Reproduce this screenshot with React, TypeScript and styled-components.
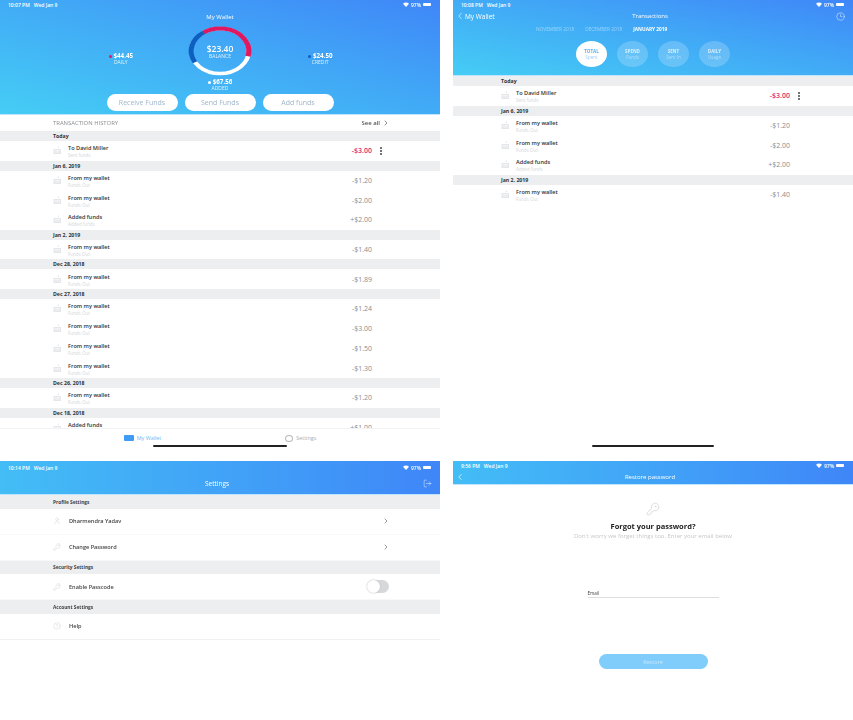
import styled, { createGlobalStyle } from 'styled-components'
import { ChevronLeft, ChevronRight, Clock3, KeyRound, LogOut, User, CircleHelp } from 'lucide-react'

const GlobalStyle = createGlobalStyle`
   html, body {
      margin: 0;
      background: #fff;
      font-family: 'Open Sans', 'Liberation Sans', sans-serif;
   }
`

const blueGradient = 'linear-gradient(to top right, #45cdf5 0%, #41a8f6 55%, #3f86f8 100%)'

type Tx = { title: string; sub: string; amount: string; active?: boolean }
type Section = { date: string; rows: Tx[] }

const out = (amount: string, sub = 'Funds Out'): Tx => ({ title: 'From my wallet', sub, amount })
const added = (amount: string): Tx => ({ title: 'Added funds', sub: 'Added funds', amount })
const sent: Tx = { title: 'To David Miller', sub: 'Sent funds', amount: '-$3.00', active: true }

const history: Section[] = [
   { date: 'Today', rows: [sent] },
   { date: 'Jan 6, 2019', rows: [out('-$1.20'), out('-$2.00'), added('+$2.00')] },
   { date: 'Jan 2, 2019', rows: [out('-$1.40')] },
   { date: 'Dec 28, 2018', rows: [out('-$1.89')] },
   { date: 'Dec 27, 2018', rows: [out('-$1.24'), out('-$3.00'), out('-$1.50'), out('-$1.30')] },
   { date: 'Dec 26, 2018', rows: [out('-$1.20')] },
   { date: 'Dec 18, 2018', rows: [added('+$1.00')] },
]

const circles = [
   { top: 'TOTAL', bottom: 'Spent' },
   { top: 'SPEND', bottom: 'Funds' },
   { top: 'SENT', bottom: 'Sent In' },
   { top: 'DAILY', bottom: 'Usage' },
]

const StatusBar = ({ time }: { time: string }) => (
   <Status>
      <span>{time} &nbsp; Wed Jan 9</span>
      <StatusRight>
         <svg width="6" height="5" viewBox="0 0 12 10" fill="#fff">
            <path d="M6 10 0 3.5C3.5 0 8.5 0 12 3.5z" />
         </svg>
         97%
         <Battery />
      </StatusRight>
   </Status>
)

const CardIcon = () => (
   <svg width="9" height="9" viewBox="0 0 18 18" fill="none">
      <path d="M11 1v3" stroke="#d5d8dc" strokeWidth="1.4" />
      <rect x="1" y="6" width="15" height="10" fill="#e4e6e9" />
      <path d="M3 9h11M3 12h11" stroke="#fff" strokeWidth="1.2" />
   </svg>
)

const DotsIcon = () => (
   <Dots>
      <i />
      <i />
      <i />
   </Dots>
)

const Transactions = ({ sections, inset, right }: { sections: Section[]; inset: number; right: number }) => (
   <List $inset={inset} $right={right}>
      {sections.map((section) => (
         <div key={section.date}>
            <DateBar>{section.date}</DateBar>
            {section.rows.map((tx, i) => (
               <TxRow key={i}>
                  <CardIcon />
                  <TxText>
                     <TxTitle>{tx.title}</TxTitle>
                     <TxSub>{tx.sub}</TxSub>
                  </TxText>
                  <TxAmount $active={tx.active}>{tx.amount}</TxAmount>
                  <DotsSlot>{tx.active && <DotsIcon />}</DotsSlot>
               </TxRow>
            ))}
         </div>
      ))}
   </List>
)

const Donut = () => (
   <DonutBox>
      <svg width="64" height="50" viewBox="0 0 100 100" preserveAspectRatio="none" fill="none">
         <circle cx="50" cy="50" r="45" stroke="#fff" strokeWidth="7" />
         <circle
            cx="50"
            cy="50"
            r="45"
            stroke="#e0185f"
            strokeWidth="8"
            strokeDasharray="108 283"
            transform="rotate(-125 50 50)"
         />
         <circle
            cx="50"
            cy="50"
            r="45"
            stroke="#0d5fc0"
            strokeWidth="8"
            strokeDasharray="67 283"
            transform="rotate(150 50 50)"
         />
      </svg>
      <DonutLabel>
         <strong>$23.40</strong>
         <span>BALANCE</span>
      </DonutLabel>
   </DonutBox>
)

const App = () => {
   return (
      <Page>
         <GlobalStyle />
         <WalletPane>
            <Hero>
               <StatusBar time="10:07 PM" />
               <HeroTitle>My Wallet</HeroTitle>
               <Summary>
                  <Stat $side="left">
                     <StatValue $dot="#e0185f">$44.45</StatValue>
                     <StatLabel>DAILY</StatLabel>
                  </Stat>
                  <Donut />
                  <Stat $side="right">
                     <StatValue $dot="#0d5fc0">$24.50</StatValue>
                     <StatLabel>CREDIT</StatLabel>
                  </Stat>
               </Summary>
               <AddedStat>
                  <StatValue $dot="#fff">$67.56</StatValue>
                  <StatLabel>ADDED</StatLabel>
               </AddedStat>
               <Actions>
                  <ActionButton>Receive Funds</ActionButton>
                  <ActionButton>Send Funds</ActionButton>
                  <ActionButton>Add funds</ActionButton>
               </Actions>
            </Hero>
            <HistoryHead>
               <span>TRANSACTION HISTORY</span>
               <SeeAll>
                  See all <ChevronRight size={8} strokeWidth={2} />
               </SeeAll>
            </HistoryHead>
            <Transactions sections={history} inset={53} right={58} />
            <TabBar>
               <TabItem $active>
                  <WalletGlyph />
                  My Wallet
               </TabItem>
               <TabItem>
                  <SettingsGlyph />
                  Settings
               </TabItem>
               <HomeBar $width={134} />
            </TabBar>
         </WalletPane>

         <TransactionsPane>
            <Hero>
               <StatusBar time="10:08 PM" />
               <NavRow>
                  <NavBack>
                     <ChevronLeft size={10} strokeWidth={1.6} />
                     My Wallet
                  </NavBack>
                  <NavTitle>Transactions</NavTitle>
                  <NavEnd>
                     <Clock3 size={9} strokeWidth={1.2} />
                  </NavEnd>
               </NavRow>
               <Months>
                  <Month>NOVEMBER 2018</Month>
                  <Month>DECEMBER 2018</Month>
                  <Month $active>JANUARY 2019</Month>
               </Months>
               <Circles>
                  {circles.map((circle, i) => (
                     <Bubble key={circle.top} $active={i === 0}>
                        <strong>{circle.top}</strong>
                        <span>{circle.bottom}</span>
                     </Bubble>
                  ))}
               </Circles>
            </Hero>
            <Transactions sections={history.slice(0, 3)} inset={48} right={53} />
            <HomeSpacer>
               <HomeBar $width={122} />
            </HomeSpacer>
         </TransactionsPane>

         <SettingsPane>
            <SlimHeader $tall>
               <StatusBar time="10:14 PM" />
               <NavRow $tall>
                  <NavBack />
                  <NavTitle $large>Settings</NavTitle>
                  <NavEnd>
                     <LogOut size={9} strokeWidth={1.2} />
                  </NavEnd>
               </NavRow>
            </SlimHeader>
            <SettingsGroup>Profile Settings</SettingsGroup>
            <SettingsRow>
               <User size={8} strokeWidth={1.2} color="#c9ccd1" />
               <SettingsLabel>Dharmendra Yadav</SettingsLabel>
               <ChevronRight size={8} strokeWidth={2} color="#666" />
            </SettingsRow>
            <SettingsRow>
               <KeyRound size={8} strokeWidth={1.2} color="#c9ccd1" />
               <SettingsLabel>Change Password</SettingsLabel>
               <ChevronRight size={8} strokeWidth={2} color="#666" />
            </SettingsRow>
            <SettingsGroup>Security Settings</SettingsGroup>
            <SettingsRow>
               <KeyRound size={8} strokeWidth={1.2} color="#c9ccd1" />
               <SettingsLabel>Enable Passcode</SettingsLabel>
               <Toggle />
            </SettingsRow>
            <SettingsGroup>Account Settings</SettingsGroup>
            <SettingsRow $lined>
               <CircleHelp size={8} strokeWidth={1.2} color="#c9ccd1" />
               <SettingsLabel>Help</SettingsLabel>
            </SettingsRow>
         </SettingsPane>

         <RestorePane>
            <SlimHeader>
               <StatusBar time="9:56 PM" />
               <NavRow>
                  <NavBack>
                     <ChevronLeft size={10} strokeWidth={1.6} />
                  </NavBack>
                  <NavTitle>Restore password</NavTitle>
                  <NavEnd />
               </NavRow>
            </SlimHeader>
            <KeyBox>
               <KeyRound size={14} strokeWidth={1.3} color="#d3d5d8" />
            </KeyBox>
            <ForgotTitle>Forgot your password?</ForgotTitle>
            <ForgotSub>Don't worry we forget things too. Enter your email below</ForgotSub>
            <EmailField>Email</EmailField>
            <RestoreButton>Restore</RestoreButton>
         </RestorePane>
      </Page>
   )
}

export default App

const Page = styled.div`
   display: grid;
   grid-template-columns: 440px 400px;
   grid-template-rows: 452px 259px;
   column-gap: 13px;
   row-gap: 9px;
   width: 853px;
   height: 720px;
   overflow: hidden;
   filter: blur(0.6px);
`
const WalletPane = styled.section`
   display: flex;
   flex-direction: column;
   overflow: hidden;
`
const TransactionsPane = styled(WalletPane)``
const SettingsPane = styled(WalletPane)``
const RestorePane = styled(WalletPane)`
   align-items: center;
`
const Hero = styled.header`
   background: ${blueGradient};
   color: #fff;
   flex: none;
   padding-bottom: 3px;
   border-bottom: 1px solid #bfe4fb;
`
const SlimHeader = styled(Hero)<{ $tall?: boolean }>`
   align-self: stretch;
   padding-top: ${(props) => (props.$tall ? '2px' : '0')};
   padding-bottom: 0;
   background: linear-gradient(to right, #43bdf6 0%, #41a3f7 50%, #3f86f8 100%);
`
const Status = styled.div`
   display: flex;
   justify-content: space-between;
   align-items: center;
   height: 9px;
   padding: 0 9px 0 8px;
   font-size: 5px;
   font-weight: 600;
   color: #fff;
`
const StatusRight = styled.span`
   display: flex;
   align-items: center;
   gap: 2px;
`
const Battery = styled.i`
   display: block;
   width: 8px;
   height: 3px;
   border-radius: 1px;
   background: #fff;
`
const HeroTitle = styled.div`
   text-align: center;
   font-size: 6px;
   line-height: 8px;
   margin-top: 4px;
`
const Summary = styled.div`
   display: grid;
   grid-template-columns: 1fr 64px 1fr;
   margin-top: 5px;
   align-items: center;
`
const Stat = styled.div<{ $side: 'left' | 'right' }>`
   justify-self: ${(props) => (props.$side === 'left' ? 'end' : 'start')};
   margin: 17px ${(props) => (props.$side === 'left' ? '55px' : '0')} 0
      ${(props) => (props.$side === 'right' ? '56px' : '0')};
   text-align: center;
`
const AddedStat = styled.div`
   text-align: center;
   margin-top: 3px;
`
const StatValue = styled.div<{ $dot: string }>`
   font-size: 6.2px;
   line-height: 6px;
   font-weight: 700;
   &::before {
      content: '';
      display: inline-block;
      width: 3px;
      height: 3px;
      margin: 0 2px 0.5px 0;
      border-radius: 50%;
      background: ${(props) => props.$dot};
   }
`
const StatLabel = styled.div`
   font-size: 5px;
   line-height: 7px;
   opacity: 0.85;
`
const DonutBox = styled.div`
   position: relative;
   width: 64px;
   height: 50px;
   svg {
      display: block;
   }
`
const DonutLabel = styled.div`
   position: absolute;
   inset: 0;
   display: flex;
   flex-direction: column;
   justify-content: center;
   align-items: center;
   strong {
      font-size: 8.5px;
      line-height: 9px;
      font-weight: 600;
   }
   span {
      font-size: 5px;
      line-height: 6px;
      opacity: 0.85;
   }
`
const Actions = styled.div`
   display: flex;
   justify-content: center;
   gap: 7px;
   margin-top: 2px;
`
const ActionButton = styled.button`
   width: 71px;
   height: 17px;
   padding: 0;
   border: 0;
   border-radius: 9px;
   background: #fff;
   color: #9fb6c8;
   font-family: inherit;
   font-size: 7px;
`
const HistoryHead = styled.div`
   display: flex;
   justify-content: space-between;
   align-items: center;
   flex: none;
   height: 16px;
   padding: 0 50px 0 53px;
   font-size: 5.9px;
   color: #8a8d91;
`
const SeeAll = styled.span`
   display: flex;
   align-items: center;
   gap: 2px;
   font-size: 6px;
   font-weight: 600;
   color: #555;
`
const List = styled.div<{ $inset: number; $right: number }>`
   --inset: ${(props) => props.$inset}px;
   --right: ${(props) => props.$right}px;
   flex: 1;
   min-height: 0;
   overflow: hidden;
`
const DateBar = styled.div`
   height: 10px;
   line-height: 10px;
   padding-left: var(--inset);
   background: #eceef0;
   font-size: 5.2px;
   font-weight: 700;
   color: #333;
`
const TxRow = styled.div`
   display: flex;
   align-items: center;
   height: 19.7px;
   padding: 0 var(--right) 0 var(--inset);
   box-sizing: border-box;
   background: #fff;
`
const TxText = styled.div`
   flex: 1;
   margin: 2px 0 0 6px;
`
const TxTitle = styled.div`
   font-size: 5.6px;
   line-height: 7px;
   font-weight: 600;
   color: #333;
`
const TxSub = styled.div`
   font-size: 4.5px;
   line-height: 6px;
   color: #d4d6da;
`
const TxAmount = styled.div<{ $active?: boolean }>`
   font-size: 7px;
   font-weight: ${(props) => (props.$active ? 600 : 400)};
   color: ${(props) => (props.$active ? '#e0306f' : '#8a8d91')};
`
const DotsSlot = styled.div`
   display: flex;
   justify-content: flex-end;
   width: 10px;
`
const Dots = styled.span`
   display: flex;
   flex-direction: column;
   gap: 1px;
   i {
      display: block;
      width: 2px;
      height: 2px;
      border-radius: 50%;
      background: #444;
   }
`
const TabBar = styled.nav`
   position: relative;
   display: flex;
   flex: none;
   justify-content: center;
   gap: 124px;
   height: 24px;
   padding-top: 5px;
   box-sizing: border-box;
   background: #fff;
   border-top: 1px solid #f1f2f4;
`
const TabItem = styled.span<{ $active?: boolean }>`
   display: flex;
   align-items: flex-start;
   gap: 3px;
   height: 9px;
   font-size: 5.4px;
   color: ${(props) => (props.$active ? '#6fb7f5' : '#a9adb2')};
`
const WalletGlyph = styled.i`
   display: block;
   width: 10px;
   height: 6px;
   margin-top: 1px;
   border-radius: 1px;
   background: #3f9bf3;
`
const SettingsGlyph = styled.i`
   display: block;
   box-sizing: border-box;
   width: 8px;
   height: 7px;
   margin-top: 1px;
   border: 1px solid #b5b8bc;
   border-radius: 50%;
`
const HomeBar = styled.i<{ $width: number }>`
   position: absolute;
   left: 50%;
   bottom: 5px;
   width: ${(props) => props.$width}px;
   height: 2px;
   margin-left: ${(props) => -props.$width / 2}px;
   border-radius: 1px;
   background: #222;
`
const HomeSpacer = styled.div`
   position: relative;
   flex: none;
   height: 14px;
`
const NavRow = styled.div<{ $tall?: boolean }>`
   display: grid;
   grid-template-columns: 1fr auto 1fr;
   align-items: center;
   height: ${(props) => (props.$tall ? '22px' : '14px')};
   padding: 0 8px 0 2px;
   font-size: 6px;
`
const NavBack = styled.span`
   display: flex;
   align-items: center;
   gap: 0;
   font-size: 6.5px;
`
const NavTitle = styled.span<{ $large?: boolean }>`
   font-size: ${(props) => (props.$large ? '6.5px' : '6px')};
`
const NavEnd = styled.span`
   display: flex;
   justify-content: flex-end;
`
const Months = styled.div`
   display: flex;
   gap: 11px;
   margin-top: 3px;
   padding-left: 83px;
`
const Month = styled.span<{ $active?: boolean }>`
   font-size: 4.8px;
   line-height: 6px;
   font-weight: ${(props) => (props.$active ? 700 : 400)};
   opacity: ${(props) => (props.$active ? 1 : 0.45)};
`
const Circles = styled.div`
   display: flex;
   justify-content: center;
   gap: 10px;
   margin-top: 9px;
   padding-bottom: 5px;
`
const Bubble = styled.div<{ $active?: boolean }>`
   display: flex;
   flex-direction: column;
   align-items: center;
   justify-content: center;
   width: 31px;
   height: 26px;
   border-radius: 50%;
   background: ${(props) => (props.$active ? '#fff' : 'rgba(255, 255, 255, 0.2)')};
   color: ${(props) => (props.$active ? '#5aaef3' : '#d8eefc')};
   strong {
      font-size: 4.5px;
      line-height: 6px;
   }
   span {
      font-size: 4.5px;
      line-height: 6px;
      opacity: 0.6;
   }
`
const SettingsGroup = styled.div`
   display: flex;
   align-items: center;
   flex: none;
   height: 13.5px;
   padding-left: 53px;
   background: #eceef0;
   font-size: 4.8px;
   font-weight: 700;
   color: #444;
`
const SettingsRow = styled.div<{ $lined?: boolean }>`
   display: flex;
   align-items: center;
   flex: none;
   height: 26px;
   padding: 0 50px 0 53px;
   box-sizing: border-box;
   background: #fff;
   border-bottom: 1px solid ${(props) => (props.$lined ? '#f0f1f3' : '#f7f8f9')};
`
const SettingsLabel = styled.span`
   flex: 1;
   margin-left: 8px;
   font-size: 5.6px;
   font-weight: 600;
   color: #444;
`
const Toggle = styled.span`
   position: relative;
   display: block;
   width: 22px;
   height: 13px;
   margin-right: 1px;
   border-radius: 7px;
   background: #d6d8db;
   &::before {
      content: '';
      position: absolute;
      top: 0;
      left: 0;
      width: 13px;
      height: 13px;
      border-radius: 50%;
      background: #fff;
      box-shadow: 0 0 2px #bbb;
   }
`
const KeyBox = styled.div`
   margin-top: 14px;
   height: 15px;
`
const ForgotTitle = styled.h1`
   margin: 7px 0 0;
   font-size: 7.5px;
   line-height: 10px;
   font-weight: 700;
   color: #222;
`
const ForgotSub = styled.p`
   margin: 1px 0 0;
   font-size: 6px;
   line-height: 8px;
   color: #c4c7ca;
`
const EmailField = styled.div`
   width: 131px;
   margin-top: 50px;
   padding-bottom: 1px;
   border-bottom: 1px solid #dcdee1;
   font-size: 4.6px;
   line-height: 6px;
   color: #444;
`
const RestoreButton = styled.button`
   width: 109px;
   height: 15px;
   margin-top: 56px;
   padding: 0;
   border: 0;
   border-radius: 8px;
   background: #80ccfb;
   color: #c8e8fc;
   font-family: inherit;
   font-size: 5.5px;
`
